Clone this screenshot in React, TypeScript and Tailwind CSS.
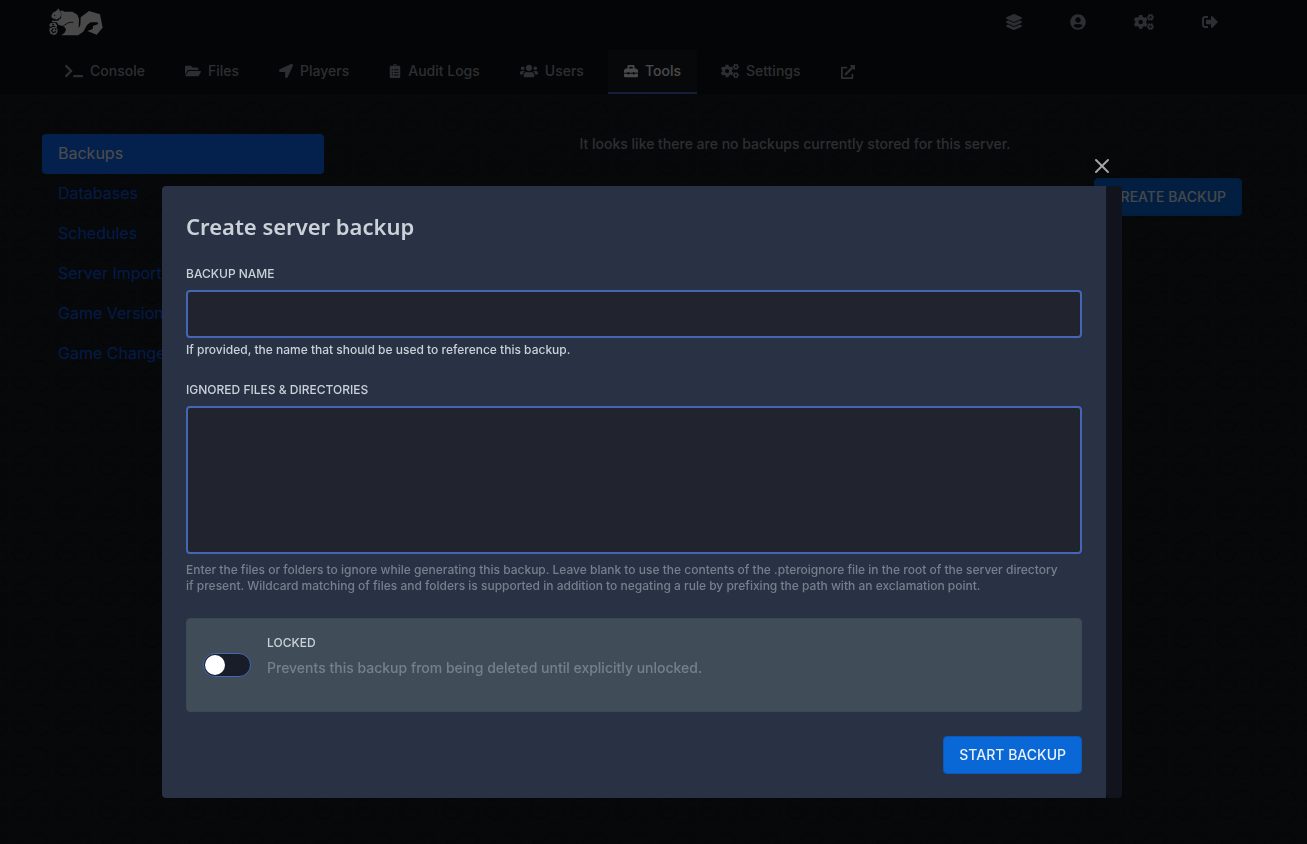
import { useState } from "react"
import type { ReactNode } from "react"
import {
  FaClipboardList,
  FaCogs,
  FaExternalLinkAlt,
  FaFolderOpen,
  FaLayerGroup,
  FaLocationArrow,
  FaSignOutAlt,
  FaTerminal,
  FaToolbox,
  FaUserCircle,
  FaUsers,
} from "react-icons/fa"
import { X } from "lucide-react"

const tabs: { label: string; icon: ReactNode; active?: boolean }[] = [
  { label: "Console", icon: <FaTerminal className="h-4 w-[18px]" /> },
  { label: "Files", icon: <FaFolderOpen className="h-4 w-4" /> },
  { label: "Players", icon: <FaLocationArrow className="h-3.5 w-3.5" /> },
  { label: "Audit Logs", icon: <FaClipboardList className="h-3.5 w-3" /> },
  { label: "Users", icon: <FaUsers className="h-4 w-[18px]" /> },
  { label: "Tools", icon: <FaToolbox className="h-3.5 w-3.5" />, active: true },
  { label: "Settings", icon: <FaCogs className="h-4 w-[18px]" /> },
]

const tools = ["Backups", "Databases", "Schedules", "Server Import", "Game Version", "Game Change"]

function Logo() {
  return (
    <svg viewBox="57 23 162 84" className="h-7 w-[54px]" fill="#f5f5f5" aria-hidden="true">
      {/* body */}
      <path d="M90 31 L98 31 L104 34 L127 34 L142 43 L147 56 L146 84 L151 74 L152 51 L177 32 L210 42 L218 82 L200 103 L172 92 L188 86 L189 77 L205 71 L202 66 L182 66 L171 74 L160 94 L144 105 L94 105 L104 97 L108 88 L104 80 L96 76 L86 74 L80 66 L66 66 L66 61 L84 61 L94 52 Z" />
      {/* head */}
      <path
        d="M85 24 L91 33 L95 42 L90 53 L80 58 L66 54 L63 47 L69 36 L78 32 Z"
        stroke="#0e1116"
        strokeWidth="1"
      />
      <circle cx="74" cy="45" r="2" fill="#0e1116" />
      <path d="M98 78 L112 69 L120 66 L130 66" fill="none" stroke="#0e1116" strokeWidth="2.5" />
      {/* acorn */}
      <path d="M62 68 L76 68 L82 76 L79 81 L83 88 L81 99 L74 104 L62 101 L58 90 L60 80 L58 74 Z" />
      <path
        d="M60 82 L68 78 L76 79 M66 71 L72 74 M63 89 L69 97 L78 94 M74 84 L79 89 M66 90 L70 84"
        fill="none"
        stroke="#0e1116"
        strokeWidth="3.5"
      />
    </svg>
  )
}

function Header() {
  return (
    <header className="bg-[#0e1116] pr-[23px] text-[#989ca3]">
      <div className="mx-auto max-w-[1200px]">
        <div className="flex h-11 items-center justify-between pr-6 pl-[7px]">
          <a href="#home" aria-label="Home">
            <Logo />
          </a>
          <div className="flex items-center gap-12">
            <a href="#servers" aria-label="Servers">
              <FaLayerGroup className="h-4 w-4" />
            </a>
            <a href="#account" aria-label="Account">
              <FaUserCircle className="h-4 w-4" />
            </a>
            <a href="#admin" aria-label="Admin">
              <FaCogs className="h-4 w-5" />
            </a>
            <a href="#logout" aria-label="Sign out">
              <FaSignOutAlt className="h-4 w-4" />
            </a>
          </div>
        </div>
        <nav className="flex gap-2 pt-1.5 pl-[7px] text-sm font-medium">
          {tabs.map((tab) => (
            <a
              key={tab.label}
              href={`#${tab.label}`}
              className={`flex h-11 items-center gap-[7px] border-b-2 px-4 ${
                tab.active ? "border-[#4466b4] bg-[#191c24] text-[#f5f5f5]" : "border-transparent"
              }`}
            >
              {tab.icon}
              {tab.label}
            </a>
          ))}
          <a href="#open" aria-label="Open in admin" className="flex h-11 items-center px-4">
            <FaExternalLinkAlt className="h-3.5 w-3.5" />
          </a>
        </nav>
      </div>
    </header>
  )
}

// Faint line pattern behind the page content
function Backdrop() {
  return (
    <svg className="absolute inset-0 -z-10 h-full w-full" aria-hidden="true">
      <defs>
        <pattern id="doodle" x="9" y="12" width="43" height="43" patternUnits="userSpaceOnUse">
          <g fill="none" stroke="#14161a" strokeWidth="1.5">
            <path d="M3 24 H24 A11 13 0 0 1 3 24 Z" />
            <path d="M26 22 H40 V30 Q36 37 26 36" />
            <path d="M5 18 Q10 10 18 13 M18 10 Q28 0 38 8 Q42 14 34 15" />
            <path d="M4 21 H18" />
          </g>
        </pattern>
      </defs>
      <rect width="100%" height="100%" fill="url(#doodle)" />
    </svg>
  )
}

function BackupDialog({ onClose }: { onClose: () => void }) {
  const [locked, setLocked] = useState(false)

  return (
    <div className="fixed inset-0 overflow-hidden bg-black/70 pr-[23px]">
      <div role="dialog" aria-labelledby="dialog-title" className="mx-auto mt-[154px] max-w-[960px]">
        <div className="flex h-8 justify-end pr-2">
          <button type="button" aria-label="Close" onClick={onClose} className="h-6 w-6 text-[#a4a5a8]">
            <X className="h-6 w-6" strokeWidth={2} />
          </button>
        </div>
        <div className="flex">
          <form className="flex-1 rounded-l bg-[#283244] p-6" onSubmit={(e) => e.preventDefault()}>
            <h2
              id="dialog-title"
              className="mb-6 font-['Noto_Sans',sans-serif] text-[22px] leading-8 font-semibold text-[#cad1d8]"
            >
              Create server backup
            </h2>

            <label htmlFor="name" className="mb-2 block text-xs font-medium text-[#cad1d8] uppercase">
              Backup name
            </label>
            <input
              id="name"
              type="text"
              className="block h-12 w-full rounded border-2 border-[#4466b4] bg-[#21242f] px-3 text-sm text-[#cad1d8] outline-none"
            />
            <p className="mt-1 text-xs font-medium text-[#cad1d8]">
              If provided, the name that should be used to reference this backup.
            </p>

            <label htmlFor="ignored" className="mt-6 mb-2 block text-xs font-medium text-[#cad1d8] uppercase">
              Ignored Files &amp; Directories
            </label>
            <textarea
              id="ignored"
              className="block h-[148px] w-full resize-none rounded border-2 border-[#4466b4] bg-[#21242f] p-3 text-sm text-[#cad1d8] outline-none"
            />
            <p className="mt-2 pr-4 text-xs font-medium text-[#75808c]">
              Enter the files or folders to ignore while generating this backup. Leave blank to use the contents of
              the .pteroignore file in the root of the server directory if present. Wildcard matching of files and
              folders is supported in addition to negating a rule by prefixing the path with an exclamation point.
            </p>

            <div className="mt-6 flex items-center gap-4 rounded border border-[#3b4855] bg-[#404d59] p-4">
              <input
                id="locked"
                type="checkbox"
                role="switch"
                checked={locked}
                onChange={(e) => setLocked(e.target.checked)}
                className="h-6 w-12 shrink-0 cursor-pointer appearance-none rounded-full border border-[#4466b4] bg-[#181d29] p-px before:block before:h-5 before:w-5 before:rounded-full before:bg-white checked:before:translate-x-6"
              />
              <div className="pb-[17px]">
                <label htmlFor="locked" className="mb-[7px] block text-xs font-medium text-[#cad1d8] uppercase">
                  Locked
                </label>
                <p className="text-sm font-medium text-[#75808c]">
                  Prevents this backup from being deleted until explicitly unlocked.
                </p>
              </div>
            </div>

            <div className="mt-6 flex justify-end">
              <button
                type="submit"
                className="rounded border border-[#0b59bd] bg-[#0967d6] px-[15px] py-2 text-sm font-medium text-[#e8f1fc] uppercase"
              >
                Start backup
              </button>
            </div>
          </form>
          {/* scroll bar track */}
          <div className="w-4 rounded bg-[#11141c]" />
        </div>
      </div>
    </div>
  )
}

export default function App() {
  const [open, setOpen] = useState(true)

  return (
    <div className="relative isolate min-h-screen bg-[#181b23] font-['Inter',sans-serif]">
      <Backdrop />
      <Header />
      <main className="pr-[23px]">
        <div className="mx-auto flex max-w-[1200px] gap-6 pt-10">
          <aside className="w-[282px] shrink-0">
            {tools.map((tool, i) => (
              <a
                key={tool}
                href={`#${tool}`}
                className={`block rounded px-4 pt-[7px] pb-[9px] text-base ${i === 0 ? "bg-[#0d6efd] text-white" : "text-[#0d5bf0]"}`}
              >
                {tool}
              </a>
            ))}
          </aside>
          <section className="flex-1">
            <p className="text-center text-sm font-medium text-[#989ca3]">
              It looks like there are no backups currently stored for this server.
            </p>
            <div className="mt-6 flex justify-end">
              <button
                type="button"
                onClick={() => setOpen(true)}
                className="rounded border border-[#0b5fc8] bg-[#0967d6] px-[15px] py-2 text-sm font-medium text-[#e8f1fc] uppercase"
              >
                Create backup
              </button>
            </div>
          </section>
        </div>
      </main>
      {open && <BackupDialog onClose={() => setOpen(false)} />}
    </div>
  )
}
